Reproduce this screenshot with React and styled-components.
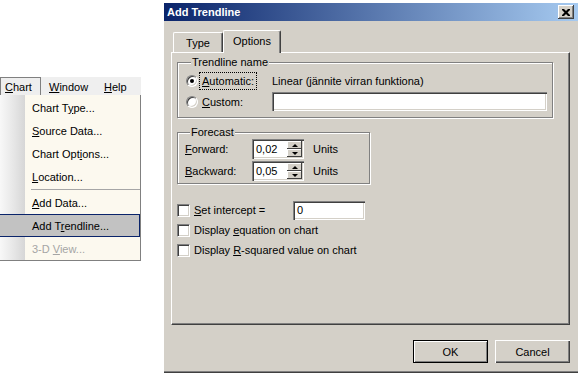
import React from 'react'
import styled, { createGlobalStyle } from 'styled-components'

const GlobalStyle = createGlobalStyle`
  html, body { margin:0; padding:0; background:#fff; }
  body {
    width:578px;
    height:375px;
    overflow:hidden;
    font-family:"Liberation Sans", Arial, sans-serif;
    font-size:11px;
    color:#000;
  }
  * { box-sizing:border-box; }
`

const Page = styled.div`
    display:flex;
    width:578px;
    height:375px;
`

/* ---------- left: excel menu ---------- */
const MenuArea = styled.div`
    width:164px;
    flex-shrink:0;
    padding-top:77px;
`
const MenuWrap = styled.div`
    width:141px;
`
const MenuBar = styled.div`
    display:flex;
    height:18px;
    background:#efefef;
`
const BarItem = styled.div`
    display:flex;
    align-items:center;
    width:${p => p.$w}px;
    padding-left:${p => p.$pl}px;
    border:1px solid ${p => p.$open ? '#808080' : 'transparent'};
    border-bottom:none;
    background:${p => p.$open ? '#eeeeee' : 'transparent'};
`
const Dropdown = styled.div`
    padding-top:1px;
    background:linear-gradient(to right, #f8f8f8 0, #e6e6e6 14px, #d6d6d6 25px, #fcf9ef 25px);
    border-right:1px solid #808080;
    border-bottom:1px solid #808080;
`
const MenuItem = styled.div`
    display:flex;
    align-items:center;
    height:23px;
    padding-left:32px;
    white-space:pre;
    color:${p => p.$disabled ? '#a5a5a5' : '#000'};
    background:${p => p.$active ? '#c2c2c2' : 'transparent'};
    border:1px solid ${p => p.$active ? '#0a246a' : 'transparent'};
    border-left:none;
`
const Separator = styled.div`
    height:1px;
    margin:1px 0 1px 31px;
    background:#a6a6a6;
`

/* ---------- right: dialog ---------- */
const Dialog = styled.div`
    flex:1;
    margin-top:3px;
    height:370px;
    display:flex;
    flex-direction:column;
    background:#d4d0c8;
    border-bottom:1px solid #404040;
    box-shadow:inset 0 -1px #808080;
`
const TitleBar = styled.div`
    display:flex;
    align-items:center;
    justify-content:space-between;
    height:18px;
    padding:0 4px 0 3px;
    background:linear-gradient(to right, #0a246a, #a6caf0);
    color:#fff;
    font-weight:bold;
`
const CloseBtn = styled.div`
    display:flex;
    align-items:center;
    justify-content:center;
    width:16px;
    height:14px;
    background:#d4d0c8;
    box-shadow:inset -1px -1px #404040, inset 1px 1px #fff, inset -2px -2px #808080;
`
const Body = styled.div`
    display:flex;
    flex-direction:column;
    padding:9px 8px 0 7px;
`
const TabRow = styled.div`
    display:flex;
    align-items:flex-end;
    height:22px;
    padding-left:2px;
`
const Tab = styled.div`
    position:relative;
    z-index:1;
    display:flex;
    align-items:center;
    justify-content:center;
    width:${p => p.$w}px;
    height:${p => p.$active ? 23 : 20}px;
    margin-bottom:${p => p.$active ? -1 : 0}px;
    padding-bottom:${p => p.$active ? 2 : 0}px;
    background:#d4d0c8;
    border-top:1px solid #fff;
    border-left:1px solid #fff;
    border-right:1px solid #404040;
    border-radius:2px 2px 0 0;
    box-shadow:inset -1px 0 #808080;
`
const Panel = styled.div`
    height:273px;
    padding:0 0 0 5px;
    border-top:1px solid #fff;
    border-left:1px solid #fff;
    border-right:1px solid #404040;
    border-bottom:1px solid #404040;
    box-shadow:inset -1px -1px #808080;
`
const Group = styled.div`
    width:${p => p.$w}px;
    margin-top:${p => p.$mt}px;
    padding:0 ${p => p.$pr}px ${p => p.$pb}px ${p => p.$pl}px;
    border:1px solid #808080;
    box-shadow:inset 1px 1px #fff, 1px 1px #fff;
`
const GroupTitle = styled.div`
    width:fit-content;
    margin:-7px 0 0 ${p => p.$ml}px;
    padding:0 1px;
    line-height:13px;
    background:#d4d0c8;
`
const Grid = styled.div`
    display:grid;
    grid-template-columns:${p => p.$cols};
    grid-auto-rows:${p => p.$row}px;
    row-gap:2px;
    align-items:center;
    margin-top:${p => p.$mt}px;
`
const Choice = styled.div`
    display:flex;
    align-items:center;
    gap:2px;
`
const Radio = styled.span`
    position:relative;
    flex-shrink:0;
    width:12px;
    height:12px;
    border-radius:50%;
    background:#fff;
    border:1px solid;
    border-color:#808080 #fff #fff #808080;
    box-shadow:inset 1px 1px #404040, inset -1px -1px #d4d0c8;
    &::after{
        content:'';
        display:${p => p.$on ? 'block' : 'none'};
        position:absolute;
        left:3px;
        top:3px;
        width:4px;
        height:4px;
        border-radius:50%;
        background:#000;
    }
`
const Label = styled.span`
    padding:1px 2px;
    line-height:14px;
    outline:${p => p.$focus ? '1px dotted #000' : 'none'};
`
const Sunken = styled.div`
    display:flex;
    align-items:center;
    width:${p => p.$w ? p.$w + 'px' : 'auto'};
    height:${p => p.$h}px;
    padding:0 2px 0 4px;
    background:#fff;
    box-shadow:inset 1px 1px #808080, inset 2px 2px #404040, inset -1px -1px #fff, inset -2px -2px #d4d0c8;
`
const SpinValue = styled.span`
    flex:1;
`
const SpinCol = styled.div`
    display:flex;
    flex-direction:column;
    width:15px;
    height:16px;
`
const SpinBtn = styled.div`
    display:flex;
    align-items:center;
    justify-content:center;
    height:8px;
    background:#d4d0c8;
    box-shadow:inset -1px -1px #404040, inset 1px 1px #fff;
    &::after{
        content:'';
        border-left:3px solid transparent;
        border-right:3px solid transparent;
        ${p => p.$down ? 'border-top:3px solid #000;' : 'border-bottom:3px solid #000;'}
    }
`
const Units = styled.span`
    margin-left:9px;
`
const FieldRow = styled.div`
    display:flex;
    align-items:center;
`
const Checks = styled.div`
    margin-top:16px;
    display:grid;
    grid-template-columns:116px 72px;
    grid-auto-rows:20px;
    align-items:center;
`
const CheckLine = styled.div`
    display:flex;
    align-items:center;
    gap:4px;
    white-space:nowrap;
    grid-column:${p => p.$wide ? 'span 2' : 'auto'};
`
const Box = styled.span`
    flex-shrink:0;
    width:13px;
    height:13px;
    background:#fff;
    border:1px solid;
    border-color:#808080 #fff #fff #808080;
    box-shadow:inset 1px 1px #404040, inset -1px -1px #d4d0c8;
`
const Buttons = styled.div`
    display:flex;
    justify-content:flex-end;
    gap:7px;
    margin-top:15px;
`
const Button = styled.div`
    display:flex;
    align-items:center;
    justify-content:center;
    width:75px;
    height:23px;
    background:#d4d0c8;
    border:${p => p.$default ? '1px solid #000' : 'none'};
    box-shadow:${p => p.$default
        ? 'inset 1px 1px #fff, inset -1px -1px #808080'
        : 'inset 1px 1px #fff, inset -1px -1px #404040, inset -2px -2px #808080'};
`

const SpinInput = ({ value }) => (
    <Sunken $w={52} $h={20}>
        <SpinValue>{value}</SpinValue>
        <SpinCol>
            <SpinBtn />
            <SpinBtn $down />
        </SpinCol>
    </Sunken>
)

const App = () => {
    return (
        <Page>
            <GlobalStyle />
            <MenuArea>
                <MenuWrap>
                    <MenuBar>
                        <BarItem $w={41} $pl={4} $open><span><u>C</u>hart</span></BarItem>
                        <BarItem $w={55} $pl={7}><span><u>W</u>indow</span></BarItem>
                        <BarItem $w={40} $pl={7}><span><u>H</u>elp</span></BarItem>
                    </MenuBar>
                    <Dropdown>
                        <MenuItem><span>Chart T<u>y</u>pe...</span></MenuItem>
                        <MenuItem><span><u>S</u>ource Data...</span></MenuItem>
                        <MenuItem><span>Chart Opt<u>i</u>ons...</span></MenuItem>
                        <MenuItem><span><u>L</u>ocation...</span></MenuItem>
                        <Separator />
                        <MenuItem><span><u>A</u>dd Data...</span></MenuItem>
                        <MenuItem $active><span>Add T<u>r</u>endline...</span></MenuItem>
                        <MenuItem $disabled><span>3-D <u>V</u>iew...</span></MenuItem>
                    </Dropdown>
                </MenuWrap>
            </MenuArea>

            <Dialog>
                <TitleBar>
                    <span>Add Trendline</span>
                    <CloseBtn>
                        <svg width="8" height="7" viewBox="0 0 8 7">
                            <path d="M0 0h2l2 2 2-2h2v1L5.5 3.5 8 6v1H6L4 5 2 7H0V6l2.5-2.5L0 1z" fill="#000" />
                        </svg>
                    </CloseBtn>
                </TitleBar>
                <Body>
                    <TabRow>
                        <Tab $w={50}>Type</Tab>
                        <Tab $w={58} $active>Options</Tab>
                    </TabRow>
                    <Panel>
                        <Group $w={376} $mt={9} $pl={8} $pr={5} $pb={6}>
                            <GroupTitle $ml={5}>Trendline name</GroupTitle>
                            <Grid $cols="86px 1fr" $row={19} $mt={2}>
                                <Choice>
                                    <Radio $on />
                                    <Label $focus><u>A</u>utomatic:</Label>
                                </Choice>
                                <span>Linear (jännite virran funktiona)</span>
                                <Choice>
                                    <Radio />
                                    <Label><u>C</u>ustom:</Label>
                                </Choice>
                                <Sunken $h={19} />
                            </Grid>
                        </Group>

                        <Group $w={193} $mt={14} $pl={7} $pr={4} $pb={2}>
                            <GroupTitle $ml={5}>Forecast</GroupTitle>
                            <Grid $cols="67px 1fr" $row={20} $mt={0}>
                                <span><u>F</u>orward:</span>
                                <FieldRow>
                                    <SpinInput value="0,02" />
                                    <Units>Units</Units>
                                </FieldRow>
                                <span><u>B</u>ackward:</span>
                                <FieldRow>
                                    <SpinInput value="0,05" />
                                    <Units>Units</Units>
                                </FieldRow>
                            </Grid>
                        </Group>

                        <Checks>
                            <CheckLine>
                                <Box />
                                <span><u>S</u>et intercept =</span>
                            </CheckLine>
                            <Sunken $w={72} $h={19}>0</Sunken>
                            <CheckLine $wide>
                                <Box />
                                <span>Display <u>e</u>quation on chart</span>
                            </CheckLine>
                            <CheckLine $wide>
                                <Box />
                                <span>Display <u>R</u>-squared value on chart</span>
                            </CheckLine>
                        </Checks>
                    </Panel>
                    <Buttons>
                        <Button $default>OK</Button>
                        <Button>Cancel</Button>
                    </Buttons>
                </Body>
            </Dialog>
        </Page>
    )
}

export default App
